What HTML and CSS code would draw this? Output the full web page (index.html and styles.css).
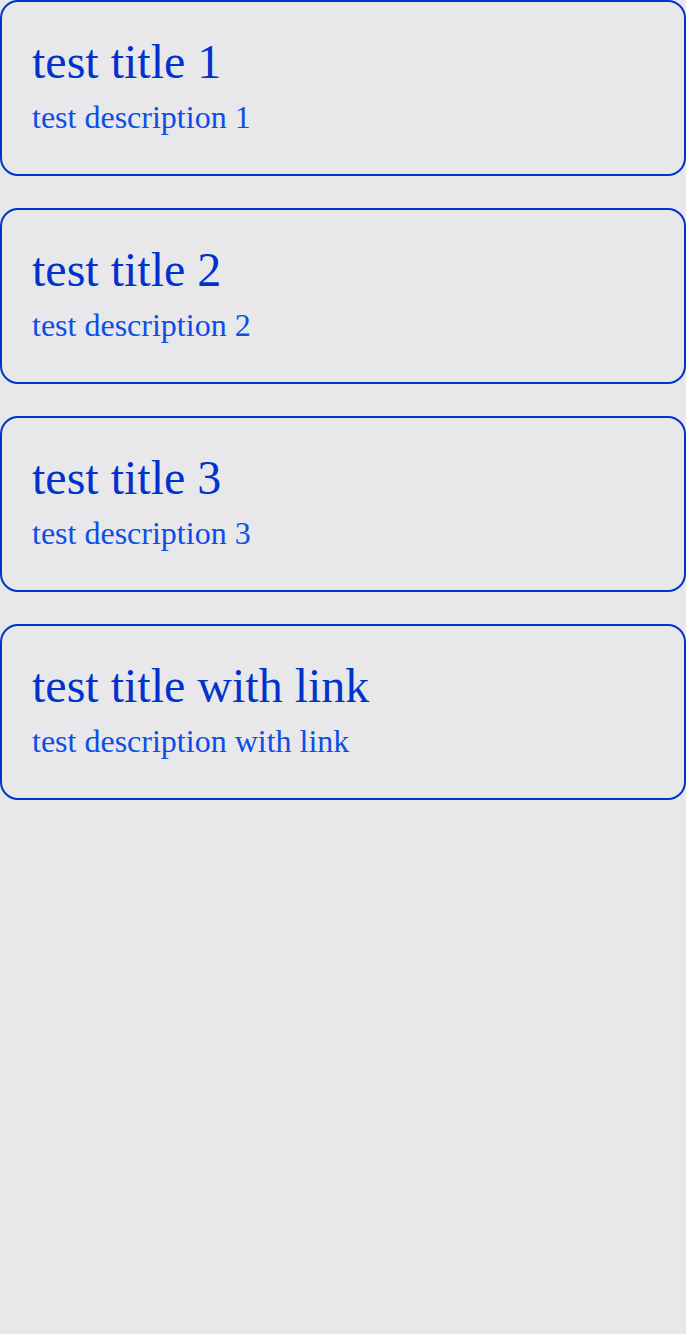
FILE: index.html
```html
<!DOCTYPE html>
<html>
<head>
<meta charset="utf-8">
<link rel="stylesheet" href="styles.css">
</head>
<body>
<div class="list">
  <div class="card"><div class="title">test title 1</div><div class="desc">test description 1</div></div>
  <div class="card"><div class="title">test title 2</div><div class="desc">test description 2</div></div>
  <div class="card"><div class="title">test title 3</div><div class="desc">test description 3</div></div>
  <div class="card"><div class="title">test title with link</div><div class="desc">test description with link</div></div>
</div>
</body>
</html>
```
FILE: styles.css
```css
html, body { margin: 0; padding: 0; background: #e8e7ea; }
body { font-family: "Liberation Serif", "Times New Roman", serif; min-height: 1334px; }
.list { display: flex; flex-direction: column; gap: 32px; }
.card {
  border: 2px solid #0033cc;
  border-radius: 18px;
  padding: 32px 30px 38px;
  height: 176px;
  box-sizing: border-box;
  display: flex;
  flex-direction: column;
  gap: 10px;
}
.title { font-size: 48px; color: #0033cc; line-height: 55px; }
.desc { font-size: 32px; color: #0a4fe6; line-height: 37px; }
```
